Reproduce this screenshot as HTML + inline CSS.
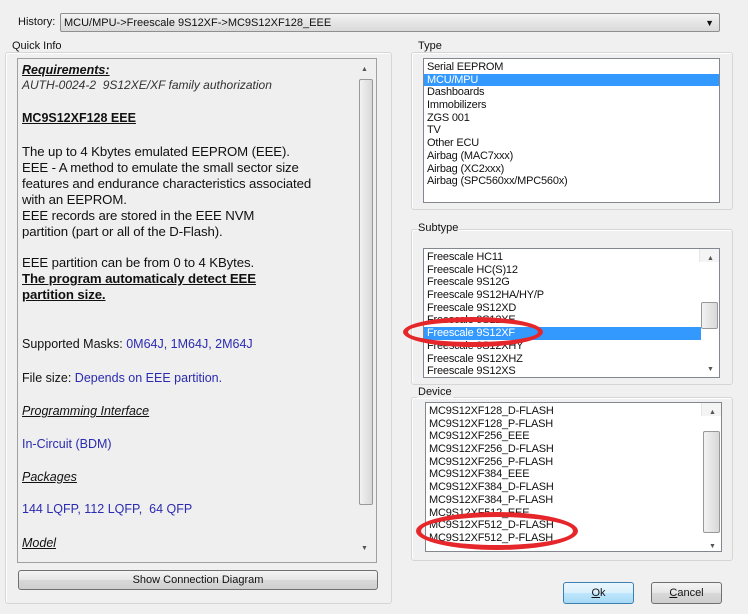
<!DOCTYPE html>
<html><head><meta charset="utf-8"><style>
body{margin:0;width:748px;height:614px;background:#f0f0f0;position:relative;overflow:hidden;font-family:"Liberation Sans",sans-serif;color:#111}
.a{position:absolute}
.grp{position:absolute;border:1px solid #d6d6d6;border-radius:3px;box-shadow:inset 1px 1px 0 #fff}
.lbl{position:absolute;font-size:11px;background:#f0f0f0;padding:0 1px}
.list{position:absolute;background:#fff;border:1px solid #828790;font-size:11px;letter-spacing:-0.2px;overflow:hidden}
.list div{height:12.7px;line-height:12.7px;padding-left:3px;white-space:nowrap}
.sel{background:#3399ff;color:#fff}
.sb{position:absolute;right:0;top:0;bottom:0;width:16px;background:#f4f4f4;border-left:1px solid #e6e6e6}
.thumb{position:absolute;left:1px;width:12px;border:1px solid #989898;border-radius:2px;background:linear-gradient(90deg,#f2f2f2,#d8d8d8)}
.arr{position:absolute;left:4px;font-size:7px;color:#555}
.btn{position:absolute;border:1px solid #707070;border-radius:3px;background:linear-gradient(#f4f4f4,#e6e6e6 50%,#d8d8d8 51%,#cfcfcf);font-size:11px;text-align:center}
.qi{position:absolute;left:22px;font-size:12.5px;white-space:nowrap}
.p{font-size:13.2px;letter-spacing:-0.1px}
.b{color:#2b2bb0}
.u{text-decoration:underline;font-style:italic}
.ell{position:absolute;border:5px solid #e5262a;border-radius:50%}
</style></head><body>
<div class="a" style="left:18px;top:16px;font-size:11px">History:</div>
<div class="a" style="left:60px;top:13px;height:19px;border:1px solid #8e8f8f;border-radius:2px;background:linear-gradient(#f5f5f5,#e5e5e5 50%,#dadada);font-size:11px;line-height:19px;padding-left:3px;box-sizing:border-box;width:660px">MCU/MPU-&gt;Freescale 9S12XF-&gt;MC9S12XF128_EEE<span class="a" style="right:5px;top:0;font-size:9px">▼</span></div>

<div class="grp" style="left:5px;top:52px;width:385px;height:550px"></div>
<div class="lbl" style="left:11px;top:40px">Quick Info</div>
<div class="a" style="left:17px;top:58px;width:358px;height:503px;border:1px solid #a0a0a0;background:#efefef"></div>
<div class="a" style="left:357px;top:60px;width:16px;height:500px">
<div class="arr" style="top:6px">▲</div>
<div class="thumb" style="top:19px;height:424px;left:2px"></div>
<div class="arr" style="top:485px">▼</div></div>
<div class="qi u" style="top:63px;font-weight:bold">Requirements:</div>
<div class="qi" style="top:78px;font-style:italic;color:#333;font-size:12px">AUTH-0024-2&nbsp; 9S12XE/XF family authorization</div>
<div class="qi" style="top:111px;font-weight:bold;text-decoration:underline">MC9S12XF128 EEE</div>
<div class="qi p" style="top:144px;line-height:16px">The up to 4 Kbytes emulated EEPROM (EEE).<br>EEE - A method to emulate the small sector size<br>features and endurance characteristics associated<br>with an EEPROM.<br>EEE records are stored in the EEE NVM<br>partition (part or all of the D-Flash).</div>
<div class="qi p" style="top:255px;line-height:16px">EEE partition can be from 0 to 4 KBytes.<br><b style="text-decoration:underline">The program automaticaly detect EEE<br>partition size.</b></div>
<div class="qi" style="top:337px">Supported Masks: <span class="b">0M64J, 1M64J, 2M64J</span></div>
<div class="qi" style="top:371px">File size: <span class="b">Depends on EEE partition.</span></div>
<div class="qi u" style="top:404px">Programming Interface</div>
<div class="qi b" style="top:437px">In-Circuit (BDM)</div>
<div class="qi u" style="top:470px">Packages</div>
<div class="qi b" style="top:502px">144 LQFP, 112 LQFP,&nbsp; 64 QFP</div>
<div class="qi u" style="top:536px">Model</div>
<div class="btn" style="left:18px;top:570px;width:358px;height:18px;line-height:18px">Show Connection Diagram</div>

<div class="grp" style="left:411px;top:52px;width:320px;height:156px"></div>
<div class="lbl" style="left:417px;top:40px">Type</div>
<div class="list" style="left:423px;top:58px;width:297px;height:145px;padding-top:2px;box-sizing:border-box">
<div>Serial EEPROM</div><div class="sel">MCU/MPU</div><div>Dashboards</div><div>Immobilizers</div><div>ZGS 001</div><div>TV</div><div>Other ECU</div><div>Airbag (MAC7xxx)</div><div>Airbag (XC2xxx)</div><div>Airbag (SPC560xx/MPC560x)</div></div>

<div class="grp" style="left:411px;top:229px;width:320px;height:154px"></div>
<div class="lbl" style="left:417px;top:222px">Subtype</div>
<div class="list" style="left:423px;top:248px;width:297px;height:130px;padding-top:2px;box-sizing:border-box">
<div>Freescale HC11</div><div>Freescale HC(S)12</div><div>Freescale 9S12G</div><div>Freescale 9S12HA/HY/P</div><div>Freescale 9S12XD</div><div>Freescale 9S12XE</div><div class="sel" style="margin-right:18px">Freescale 9S12XF</div><div>Freescale 9S12XHY</div><div>Freescale 9S12XHZ</div><div>Freescale 9S12XS</div>
<div class="sb"><div class="arr" style="top:4px">▲</div><div class="thumb" style="top:53px;height:25px"></div><div class="arr" style="top:115px">▼</div></div></div>

<div class="grp" style="left:411px;top:397px;width:320px;height:162px"></div>
<div class="lbl" style="left:417px;top:386px">Device</div>
<div class="list" style="left:425px;top:402px;width:297px;height:150px;padding-top:2px;box-sizing:border-box">
<div>MC9S12XF128_D-FLASH</div><div>MC9S12XF128_P-FLASH</div><div>MC9S12XF256_EEE</div><div>MC9S12XF256_D-FLASH</div><div>MC9S12XF256_P-FLASH</div><div>MC9S12XF384_EEE</div><div>MC9S12XF384_D-FLASH</div><div>MC9S12XF384_P-FLASH</div><div>MC9S12XF512_EEE</div><div>MC9S12XF512_D-FLASH</div><div>MC9S12XF512_P-FLASH</div>
<div class="sb"><div class="arr" style="top:4px">▲</div><div class="thumb" style="top:28px;height:100px"></div><div class="arr" style="top:138px">▼</div></div></div>

<div class="ell" style="left:403px;top:317px;width:130px;height:20px"></div>
<div class="ell" style="left:416px;top:512px;width:152px;height:28px"></div>

<div class="btn" style="left:563px;top:582px;width:69px;height:20px;line-height:20px;border-color:#3c7fb1;background:linear-gradient(#eaf6fd,#d9f0fc 50%,#bee6fd 51%,#a7d9f5)"><u>O</u>k</div>
<div class="btn" style="left:651px;top:582px;width:69px;height:20px;line-height:20px"><u>C</u>ancel</div>
</body></html>
